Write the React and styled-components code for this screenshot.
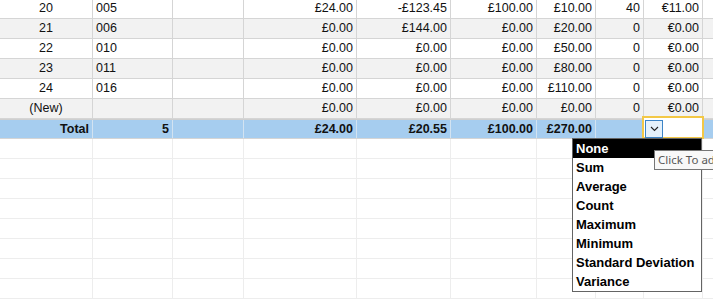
import React from 'react';
import styled, { createGlobalStyle } from 'styled-components';

const GlobalStyle = createGlobalStyle`
  body {
    margin: 0;
    background: #fff;
    overflow: hidden;
    font-family: "Liberation Sans", Arial, sans-serif;
  }
`;

const widths = [93, 80, 71, 113, 94, 86, 59, 48, 59];
const aligns = ['center', 'left', 'right', 'right', 'right', 'right', 'right', 'right', 'right'];
const totalAligns = ['right', 'right', 'right', 'right', 'right', 'right', 'right', 'right', 'right'];

const rows = [
  ['20', '005', '', '£24.00', '-£123.45', '£100.00', '£10.00', '40', '€11.00'],
  ['21', '006', '', '£0.00', '£144.00', '£0.00', '£20.00', '0', '€0.00'],
  ['22', '010', '', '£0.00', '£0.00', '£0.00', '£50.00', '0', '€0.00'],
  ['23', '011', '', '£0.00', '£0.00', '£0.00', '£80.00', '0', '€0.00'],
  ['24', '016', '', '£0.00', '£0.00', '£0.00', '£110.00', '0', '€0.00'],
  ['(New)', '', '', '£0.00', '£0.00', '£0.00', '£0.00', '0', '€0.00'],
];

const totals = ['Total', '5', '', '£24.00', '£20.55', '£100.00', '£270.00', '', ''];

const options = ['None', 'Sum', 'Average', 'Count', 'Maximum', 'Minimum', 'Standard Deviation', 'Variance'];

const Sheet = styled.div`
  width: 713px;
  height: 300px;
  overflow: hidden;
  position: relative;
`;

const Grid = styled.div`
  margin-top: -1px;
`;

const Row = styled.div`
  display: flex;
  height: 20px;
  box-sizing: border-box;
  border-bottom: 1px solid ${p => (p.$empty ? '#ededed' : '#d5d5d5')};
  background: ${p => (p.$alt ? '#f2f2f2' : '#fff')};
`;

const TotalRow = styled.div`
  position: relative;
  display: flex;
  height: 20px;
  box-sizing: border-box;
  border-top: 1px solid #cfcfcf;
  border-bottom: 1px solid #d5d5d5;
  background: #a6cdef;
`;

const Cell = styled.div`
  flex: none;
  width: ${p => p.$w}px;
  box-sizing: border-box;
  border-right: 1px solid ${p => (p.$empty ? '#ededed' : p.$total ? '#d3e3f1' : '#d5d5d5')};
  padding: 0 3px;
  font-size: 12.5px;
  font-weight: ${p => (p.$total ? 700 : 400)};
  line-height: ${p => (p.$total ? 18 : 19)}px;
  color: #111;
  text-align: ${p => p.$align};
  white-space: nowrap;
  overflow: hidden;
`;

const Filler = styled.div`
  flex: 1;
`;

const SelectedBox = styled.div`
  position: absolute;
  left: 642px;
  top: -4px;
  width: 62px;
  height: 23px;
  box-sizing: border-box;
  border: 2px solid #f3c846;
  background: #fff;
`;

const DropButton = styled.div`
  position: absolute;
  left: 645px;
  top: 0;
  width: 18px;
  height: 18px;
  box-sizing: border-box;
  border: 1px solid #3d84c6;
  background: #e5f1fb;
  display: flex;
  align-items: center;
  justify-content: center;
`;

const ListBox = styled.div`
  position: absolute;
  left: 572px;
  top: 18px;
  width: 130px;
  box-sizing: border-box;
  border: 1px solid #646464;
  background: #fff;
`;

const ListItem = styled.div`
  height: 19px;
  line-height: 19px;
  padding-left: 3px;
  font-size: 13px;
  font-weight: 700;
  white-space: nowrap;
  color: ${p => (p.$active ? '#fff' : '#000')};
  background: ${p => (p.$active ? '#000' : 'transparent')};
`;

const Tooltip = styled.div`
  position: absolute;
  left: 654px;
  top: 30px;
  height: 20px;
  box-sizing: border-box;
  padding: 0 4px 0 3px;
  border: 1px solid #767676;
  background: #f8f8f8;
  color: #575757;
  font-family: "Noto Sans", "Liberation Sans", sans-serif;
  font-size: 11.5px;
  line-height: 18px;
  white-space: nowrap;
`;

const Chevron = () => (
  <svg width="9" height="6" viewBox="0 0 9 6">
    <path d="M1 1l3.5 3.5L8 1" fill="none" stroke="#222" strokeWidth="1.1" />
  </svg>
);

export default function App() {
  return (
    <Sheet>
      <GlobalStyle />
      <Grid>
        {rows.map((r, i) => (
          <Row key={i} $alt={i % 2 === 1}>
            {r.map((v, j) => (
              <Cell key={j} $w={widths[j]} $align={aligns[j]}>{v}</Cell>
            ))}
            <Filler />
          </Row>
        ))}
        <TotalRow>
          {totals.map((v, j) => (
            <Cell key={j} $w={widths[j]} $align={totalAligns[j]} $total>{v}</Cell>
          ))}
          <Filler />
          <SelectedBox />
          <DropButton><Chevron /></DropButton>
          <ListBox>
            {options.map((o, i) => (
              <ListItem key={o} $active={i === 0}>{o}</ListItem>
            ))}
          </ListBox>
          <Tooltip>Click To add</Tooltip>
        </TotalRow>
        {Array.from({ length: 8 }).map((_, i) => (
          <Row key={'e' + i} $empty>
            {widths.map((w, j) => (
              <Cell key={j} $w={w} $align="left" $empty />
            ))}
            <Filler />
          </Row>
        ))}
      </Grid>
    </Sheet>
  );
}
